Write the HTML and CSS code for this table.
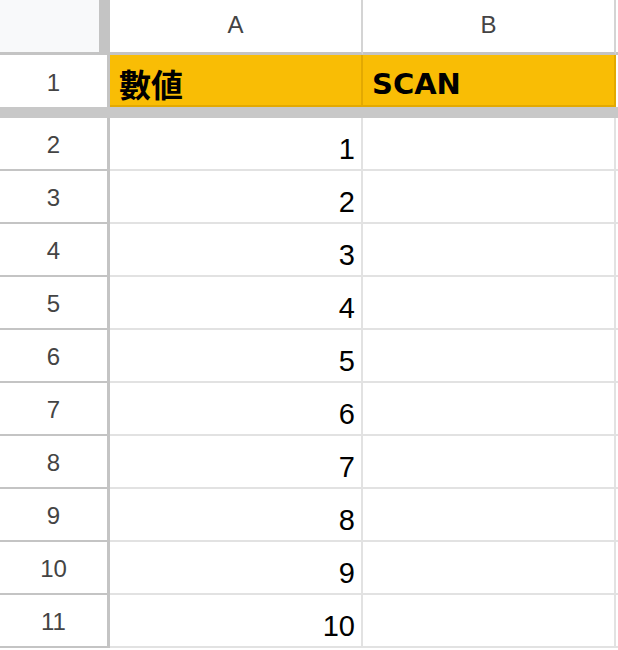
FILE: index.html
```html
<!DOCTYPE html>
<html>
<head>
<meta charset="utf-8">
<link rel="stylesheet" href="styles.css">
</head>
<body>
<div class="sheet">
  <div class="row head">
    <div class="corner"></div>
    <div class="colhead">A</div>
    <div class="colhead">B</div>
    <div class="colhead rest"></div>
  </div>
  <div class="row r1">
    <div class="rowhead">1</div>
    <div class="cell yellow"><span class="cjk">數値</span></div>
    <div class="cell yellow"><span class="latin">SCAN</span></div>
    <div class="cell rest"></div>
  </div>
  <div class="freeze"></div>
  <div class="row"><div class="rowhead">2</div><div class="cell num">1</div><div class="cell"></div><div class="cell rest"></div></div>
  <div class="row"><div class="rowhead">3</div><div class="cell num">2</div><div class="cell"></div><div class="cell rest"></div></div>
  <div class="row"><div class="rowhead">4</div><div class="cell num">3</div><div class="cell"></div><div class="cell rest"></div></div>
  <div class="row"><div class="rowhead">5</div><div class="cell num">4</div><div class="cell"></div><div class="cell rest"></div></div>
  <div class="row"><div class="rowhead">6</div><div class="cell num">5</div><div class="cell"></div><div class="cell rest"></div></div>
  <div class="row"><div class="rowhead">7</div><div class="cell num">6</div><div class="cell"></div><div class="cell rest"></div></div>
  <div class="row"><div class="rowhead">8</div><div class="cell num">7</div><div class="cell"></div><div class="cell rest"></div></div>
  <div class="row"><div class="rowhead">9</div><div class="cell num">8</div><div class="cell"></div><div class="cell rest"></div></div>
  <div class="row"><div class="rowhead">10</div><div class="cell num">9</div><div class="cell"></div><div class="cell rest"></div></div>
  <div class="row"><div class="rowhead">11</div><div class="cell num">10</div><div class="cell"></div><div class="cell rest"></div></div>
</div>
</body>
</html>
```
FILE: styles.css
```css
* { box-sizing: border-box; }
html, body { margin: 0; padding: 0; background: #fff; }
body { font-family: "Liberation Sans", Arial, sans-serif; }
.sheet { width: 618px; height: 650px; overflow: hidden; }
.row {
  display: grid;
  grid-template-columns: 110px 253px 253px 2px;
  height: 53px;
}
.row.head { height: 55px; }
.row.r1 { height: 52px; }
.corner {
  background: #f8f9fa;
  border-right: 11px solid #c4c4c4;
  border-bottom: 3px solid #c4c4c4;
}
.colhead {
  display: flex;
  align-items: center;
  justify-content: center;
  font-family: "Liberation Sans", Arial, sans-serif;
  font-size: 24px;
  color: #444;
  background: #fff;
  border-right: 2px solid #d4d4d4;
  border-bottom: 3px solid #c4c4c4;
  padding-bottom: 3px;
}
.colhead.rest { border-right: none; }
.rowhead {
  display: flex;
  align-items: center;
  justify-content: center;
  font-family: "Liberation Sans", Arial, sans-serif;
  font-size: 24px;
  color: #444;
  background: #fff;
  border-right: 3px solid #c4c4c4;
  border-bottom: 2px solid #c4c4c4;
  padding-top: 3px;
}
.r1 .rowhead { border-bottom: none; }
.cell {
  display: flex;
  align-items: flex-end;
  background: #fff;
  border-right: 2px solid #e2e2e2;
  border-bottom: 2px solid #e2e2e2;
}
.cell.rest { border-right: none; }
.cell.num {
  justify-content: flex-end;
  font-size: 29px;
  line-height: 1;
  color: #000;
  padding-right: 6px;
  padding-bottom: 5px;
}
.cell.yellow {
  background: #f9bd05;
  border-right: 2px solid #e3a902;
  border-bottom: 2px solid #e3a902;
  padding-left: 9px;
  padding-bottom: 6px;
  color: #000;
}
.r1 .cell.rest { border-bottom: none; }
.cjk {
  font-family: "Noto Sans CJK JP", sans-serif;
  font-weight: 700;
  font-size: 32px;
  line-height: 1;
}
.latin {
  font-family: "DejaVu Sans", sans-serif;
  font-weight: 700;
  font-size: 29px;
  line-height: 1;
}
.freeze { height: 11px; background: #c8c8c8; }
```
